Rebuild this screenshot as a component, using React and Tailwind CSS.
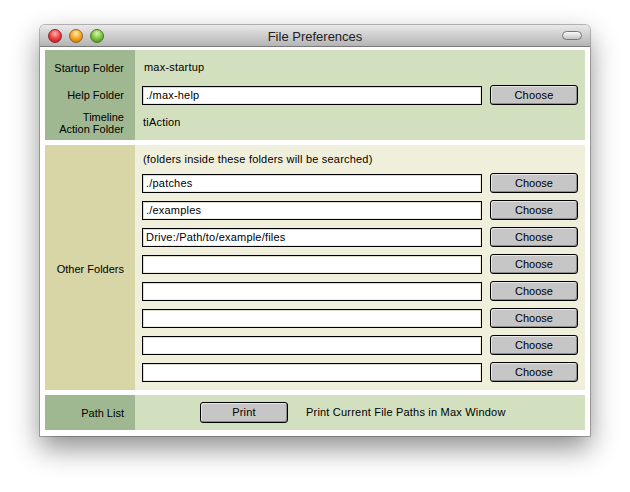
import React from 'react';

const FONT = { fontFamily: '"Liberation Sans", Arial, sans-serif' };

function Light({ color }) {
  const fills = {
    red: 'bg-[radial-gradient(circle_at_50%_30%,#ffb4b4_0%,#f04a4a_45%,#a50d0d_100%)] border-[#8a2a2a]',
    yellow: 'bg-[radial-gradient(circle_at_50%_30%,#ffe9a8_0%,#f5a623_50%,#b86a00_100%)] border-[#8a6a2a]',
    green: 'bg-[radial-gradient(circle_at_50%_30%,#d8f7b0_0%,#7cc43f_50%,#3f7f12_100%)] border-[#4a7a2a]',
  };
  return <div className={`w-[14px] h-[14px] rounded-full border ${fills[color]}`} />;
}

function Field({ value = '' }) {
  return (
    <div className="w-[340px] h-[19px] border border-black bg-white shadow-[inset_1px_1px_0_#dcdccc,inset_-1px_-1px_0_#ecebdc] flex items-center pl-[3px] text-[11px] tracking-[0.2px] text-black">
      {value}
    </div>
  );
}

function Btn({ children, w = 'w-[88px]', h = 'h-[20px]' }) {
  return (
    <button type="button" className={`${w} ${h} border border-black rounded-[3px] bg-[#c6c6c6] shadow-[inset_-1px_-1px_0_#8c8c8c,inset_1px_1px_0_#e6e6e6] text-[11px] text-black flex items-center justify-center`}>
      {children}
    </button>
  );
}

function Row({ label, labelBg, contentBg, h, children, labelClass = '' }) {
  return (
    <div className={`flex ${h}`}>
      <div className={`w-[90px] shrink-0 ${labelBg} flex items-center justify-end pr-[11px] text-right text-[11px] leading-[12px] text-black ${labelClass}`}>
        {label}
      </div>
      <div className={`flex-1 ${contentBg} flex items-center pl-[7px] pr-[7px] gap-[8px] text-[11px] tracking-[0.2px] text-black`}>
        {children}
      </div>
    </div>
  );
}

const others = ['./patches', './examples', 'Drive:/Path/to/example/files', '', '', '', '', ''];

export default function App() {
  const topL = 'bg-[#a0b891]';
  const topC = 'bg-[#d3e0bf]';
  return (
    <div className="w-[630px] h-[492px] bg-white pt-[25px] pl-[40px]" style={FONT}>
      <div className="w-[550px] rounded-t-[5px] shadow-[0_12px_28px_rgba(0,0,0,0.45),0_0_0_1px_rgba(0,0,0,0.25)] bg-white">
        {/* title bar */}
        <div className="relative h-[22px] rounded-t-[5px] bg-[linear-gradient(#e9e9e9,#b4b4b4)] border-b border-[#7a7a7a] flex items-center">
          <div className="flex items-center gap-[7px] pl-[8px] pt-[1px]">
            <Light color="red" />
            <Light color="yellow" />
            <Light color="green" />
          </div>
          <div className="absolute inset-0 flex items-center justify-center pt-[2px] text-[13px] text-[#222]">File Preferences</div>
          <div className="absolute right-[8px] top-[6px] w-[20px] h-[9px] rounded-full border border-[#777] bg-[linear-gradient(#fafafa,#c4c4c4)]" />
        </div>

        <div className="px-[5px] pt-[3px] pb-[6px] flex flex-col gap-[5px]">
          {/* startup / help / timeline */}
          <div className="flex flex-col">
            <Row label="Startup Folder" labelBg={topL} contentBg={topC} h="h-[35px]">
              <span className="pl-[2px]">max-startup</span>
            </Row>
            <Row label="Help Folder" labelBg={topL} contentBg={topC} h="h-[20px]">
              <Field value="./max-help" />
              <Btn>Choose</Btn>
            </Row>
            <Row label={<span>Timeline<br />Action Folder</span>} labelBg={topL} contentBg={topC} h="h-[35px]">
              <span className="pl-[1px]">tiAction</span>
            </Row>
          </div>

          {/* other folders */}
          <div className="flex h-[245px]">
            <div className="w-[90px] shrink-0 bg-[#d8d5a7] flex items-center justify-end pr-[11px] pt-[3px] text-[11px] text-black">
              Other Folders
            </div>
            <div className="flex-1 bg-[#f0efdc] flex flex-col pl-[7px] pr-[7px] pb-[8px]">
              <div className="h-[28px] flex items-center pl-[1px] text-[11px] tracking-[0.2px] text-black">
                (folders inside these folders will be searched)
              </div>
              <div className="flex flex-col gap-[7px]">
                {others.map((v, i) => (
                  <div key={i} className="flex items-center gap-[8px] h-[20px]">
                    <Field value={v} />
                    <Btn>Choose</Btn>
                  </div>
                ))}
              </div>
            </div>
          </div>

          {/* path list */}
          <Row label="Path List" labelBg={topL} contentBg={topC} h="h-[35px]">
            <div className="flex items-center gap-[18px] pl-[58px]">
              <Btn h="h-[21px]">Print</Btn>
              <span>Print Current File Paths in Max Window</span>
            </div>
          </Row>
        </div>
      </div>
    </div>
  );
}
